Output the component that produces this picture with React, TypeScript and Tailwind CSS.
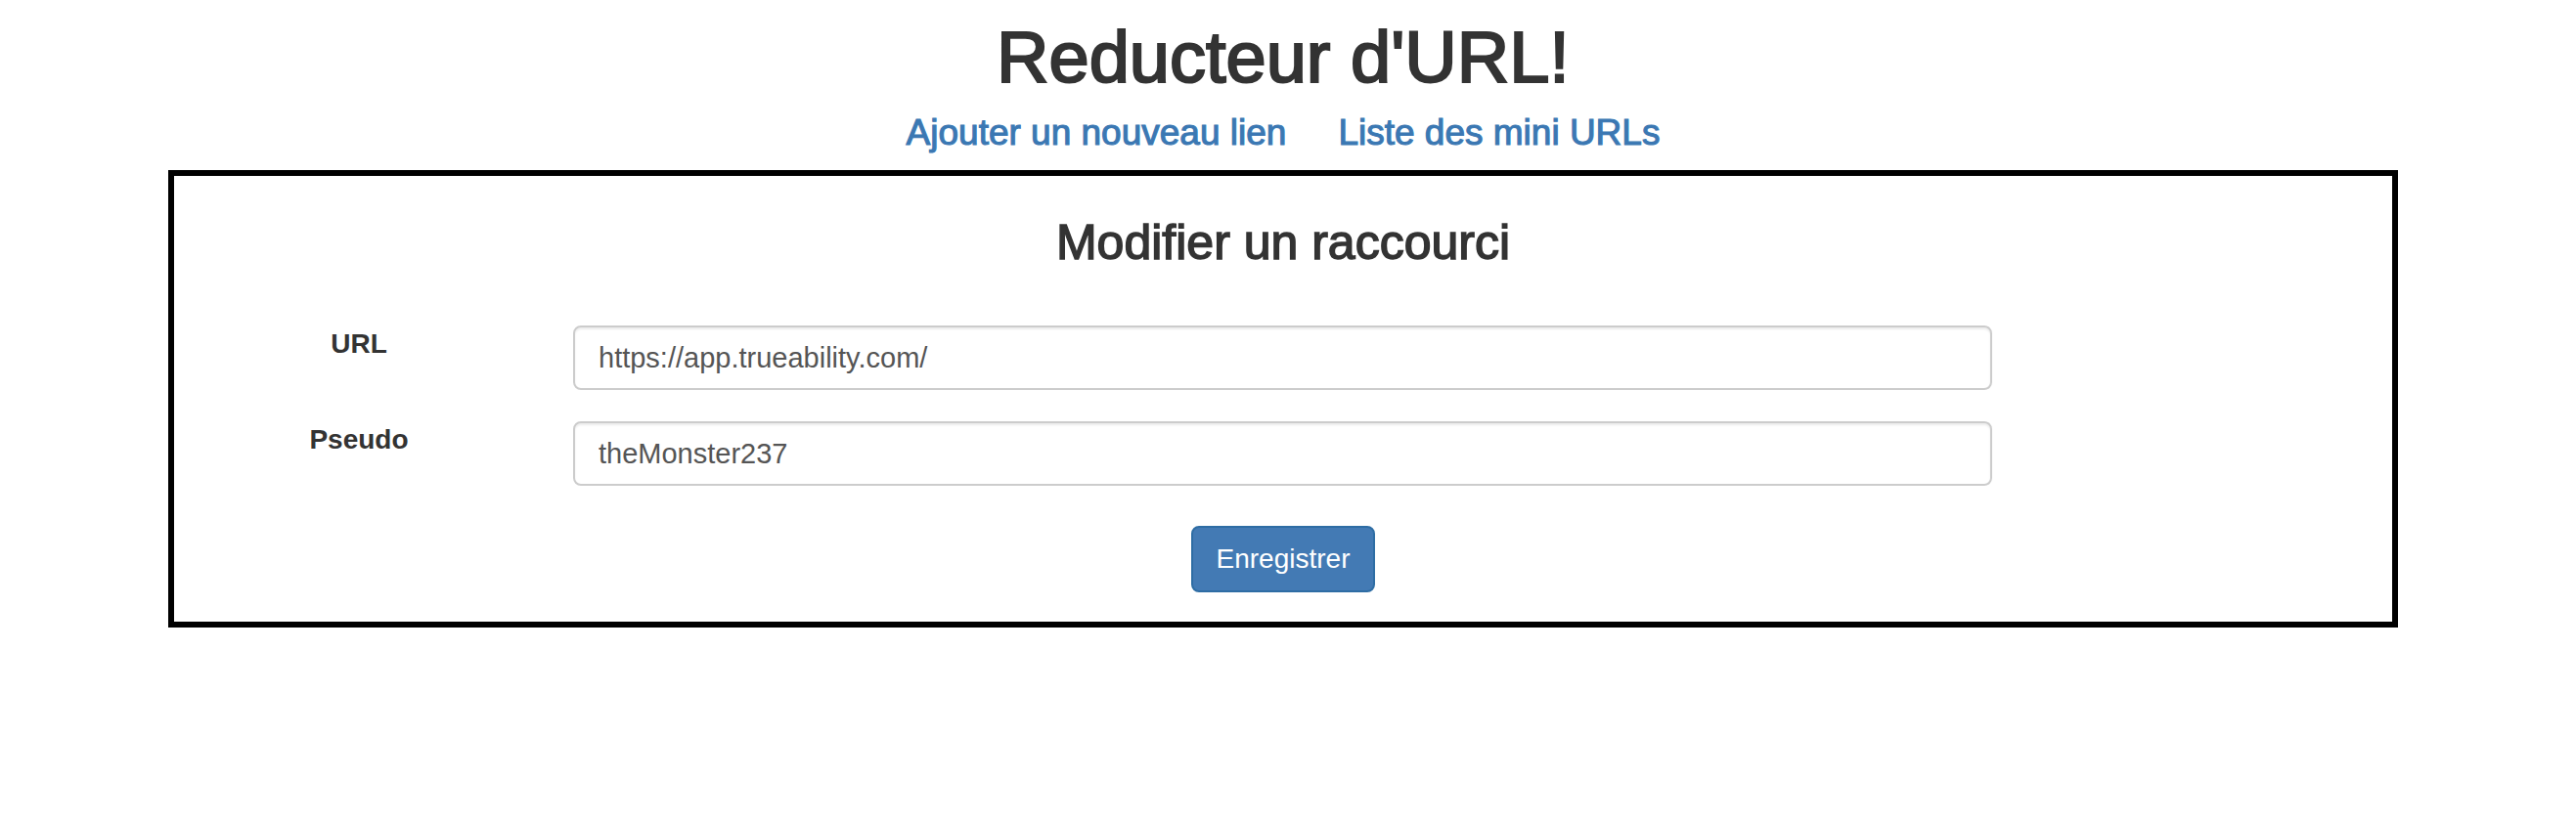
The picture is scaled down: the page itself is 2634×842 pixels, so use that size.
export default function App() {
  return (
    <div className="w-[2624px] bg-white text-[#333] font-['Liberation_Sans',Arial,sans-serif]">
      <h1 className="pt-[22px] text-center text-[74px] leading-none font-normal [-webkit-text-stroke:2.2px_#333]">
        Reducteur d'URL!
      </h1>
      <nav className="mt-[21px] flex justify-center gap-[53px] text-[37px] leading-none">
        <a href="#" className="text-[#3b78b3] [-webkit-text-stroke:1.1px_#3b78b3]">Ajouter un nouveau lien</a>
        <a href="#" className="text-[#3b78b3] [-webkit-text-stroke:1.1px_#3b78b3]">Liste des mini URLs</a>
      </nav>

      <div className="mt-[20px] ml-[172px] w-[2280px] border-[6px] border-black pt-[43px] pb-[30px]">
        <h3 className="text-center text-[50px] leading-none font-normal [-webkit-text-stroke:1.5px_#333]">
          Modifier un raccourci
        </h3>

        <form className="mt-[60px] flex flex-col gap-[32px]">
          <div className="flex items-start">
            <label className="w-[378px] pt-[5px] text-center text-[28px] leading-none font-bold">URL</label>
            <input
              defaultValue="https://app.trueability.com/"
              className="ml-[30px] h-[66px] w-[1451px] rounded-[8px] border-2 border-[#ccc] px-[24px] text-[29px] text-[#555] shadow-[inset_0_2px_2px_rgba(0,0,0,0.075)] outline-none"
            />
          </div>
          <div className="flex items-start">
            <label className="w-[378px] pt-[5px] text-center text-[28px] leading-none font-bold">Pseudo</label>
            <input
              defaultValue="theMonster237"
              className="ml-[30px] h-[66px] w-[1451px] rounded-[8px] border-2 border-[#ccc] px-[24px] text-[29px] text-[#555] shadow-[inset_0_2px_2px_rgba(0,0,0,0.075)] outline-none"
            />
          </div>
          <div className="mt-[9px] flex justify-center">
            <button
              type="button"
              className="h-[68px] rounded-[8px] border-2 border-[#2e6da4] bg-[#437ab4] px-[24px] text-[28px] text-white"
            >
              Enregistrer
            </button>
          </div>
        </form>
      </div>
    </div>
  );
}
